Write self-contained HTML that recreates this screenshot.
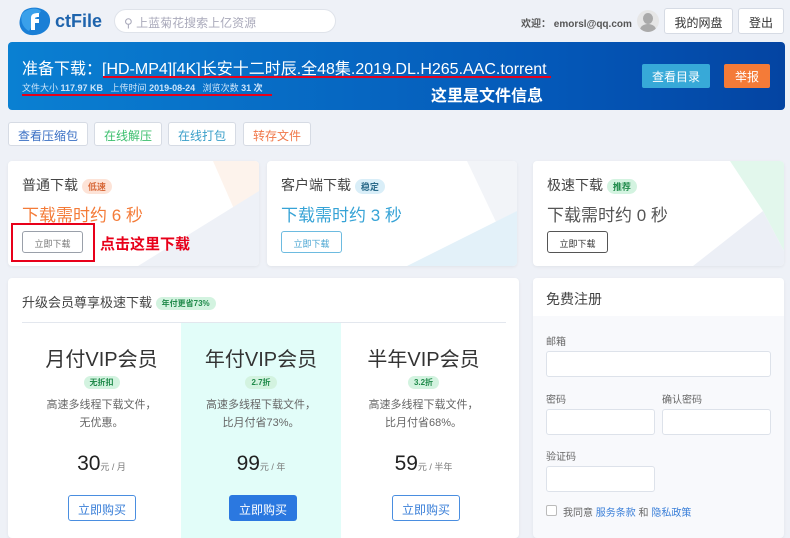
<!DOCTYPE html>
<html><head><meta charset="utf-8"><style>
*{box-sizing:border-box;margin:0;padding:0}
body{width:790px;height:528px;overflow:hidden;background:#eef1f7;font-family:"Liberation Sans","Noto Sans CJK SC",sans-serif;position:relative;color:#333}
.a{position:absolute}
.btn{position:absolute;background:#fff;border:1px solid #d6dbe4;border-radius:3px;font-size:12px;text-align:center}
.card{position:absolute;background:#fff;border-radius:4px;box-shadow:0 1px 3px rgba(0,0,0,.06);overflow:hidden}
.tag{display:inline-block;font-size:9px;padding:1px 6px;border-radius:8px;vertical-align:middle;font-weight:bold}
.inp{position:absolute;background:#fff;border:1px solid #dde2ea;border-radius:3px;height:26px}
.lbl{position:absolute;font-size:10px;color:#666}
</style></head><body>
<svg class="a" style="left:19px;top:6px" width="32" height="30" viewBox="0 0 32 30"><path d="M6 4 C14 -1 30 2 31 13 C32 24 22 30 12 29 C3 28 -1 20 1 13 C2 9 3 6 6 4Z" fill="#1a7fd6"/><path d="M3 8 C8 2 18 1 22 5 L10 25 C4 22 1 15 3 8Z" fill="#3aa0ea"/><path d="M12 24 L12 12 C12 8 15 7 20 7 L20 11 C17 11 16 11 16 13 L20 13 L20 17 L16 17 L16 24Z" fill="#fff"/></svg>
<div class="a" style="left:55px;top:11px;font-size:18px;font-weight:bold;color:#1e64ad">ctFile</div>
<div class="a" style="left:114px;top:9px;width:222px;height:24px;background:#fff;border:1px solid #dfe3ea;border-radius:12px;font-size:12px;color:#aab;padding:4px 0 0 9px">⚲ 上蓝菊花搜索上亿资源</div>
<div class="a" style="left:521px;top:15px;font-size:10px;color:#555;font-weight:bold">欢迎： emorsl@qq.com</div>
<div class="a" style="left:637px;top:10px;width:22px;height:22px;border-radius:50%;background:#e6e6e6;overflow:hidden"><div class="a" style="left:6px;top:3px;width:10px;height:11px;border-radius:50%;background:#aaa"></div><div class="a" style="left:3px;top:14px;width:16px;height:12px;border-radius:50%;background:#aaa"></div></div>
<div class="btn" style="left:664px;top:8px;width:69px;height:26px;padding-top:5px">我的网盘</div>
<div class="btn" style="left:738px;top:8px;width:46px;height:26px;padding-top:5px">登出</div>
<div class="a" style="left:8px;top:42px;width:777px;height:68px;border-radius:4px;background:linear-gradient(90deg,#0a80d2,#0458b8 70%,#0444a2)"></div>
<div class="a" style="left:22px;top:55px;font-size:16px;color:#fff;white-space:nowrap">准备下载：[HD-MP4][4K]长安十二时辰.全48集.2019.DL.H265.AAC.torrent</div>
<div class="a" style="left:103px;top:76px;width:448px;height:2px;background:#e8001a"></div>
<div class="a" style="left:22px;top:81px;font-size:9px;color:#cfe6fa;white-space:nowrap">文件大小 <b>117.97 KB</b> &nbsp; 上传时间 <b>2019-08-24</b> &nbsp; 浏览次数 <b>31 次</b></div>
<div class="a" style="left:22px;top:94px;width:250px;height:2px;background:#e8001a"></div>
<div class="a" style="left:431px;top:82px;font-size:16px;font-weight:bold;color:#fff">这里是文件信息</div>
<div class="a" style="left:642px;top:64px;width:68px;height:24px;background:#37a9d8;border-radius:2px;color:#fff;font-size:12px;text-align:center;padding-top:4px">查看目录</div>
<div class="a" style="left:724px;top:64px;width:46px;height:24px;background:#f47b38;border-radius:2px;color:#fff;font-size:12px;text-align:center;padding-top:4px">举报</div>
<div class="btn" style="left:8px;top:122px;width:80px;height:24px;padding-top:4px;color:#3a6fc4">查看压缩包</div>
<div class="btn" style="left:94px;top:122px;width:68px;height:24px;padding-top:4px;color:#3cbf6e">在线解压</div>
<div class="btn" style="left:168px;top:122px;width:68px;height:24px;padding-top:4px;color:#3a9fc9">在线打包</div>
<div class="btn" style="left:243px;top:122px;width:68px;height:24px;padding-top:4px;color:#f0784a">转存文件</div>

<div class="card" style="left:8px;top:161px;width:251px;height:105px">
<svg class="a" style="left:0;top:0" width="251" height="105"><polygon points="205,0 251,0 251,105" fill="#fdf3ec"/><polygon points="251,30 251,105 130,105" fill="#eef1f7"/></svg>
<div class="a" style="left:14px;top:14px;font-size:14px;color:#444">普通下载 <span class="tag" style="background:#fde3d7;color:#d86a3b">低速</span></div>
<div class="a" style="left:14px;top:40px;font-size:17px;color:#f47b38">下载需时约 6 秒</div>
<div class="a" style="left:14px;top:70px;width:61px;height:22px;border:1px solid #9aa0aa;border-radius:3px;font-size:9px;color:#777;text-align:center;padding-top:5px">立即下载</div>
</div>
<div class="a" style="left:11px;top:223px;width:84px;height:39px;border:2px solid #e8001a"></div>
<div class="a" style="left:100px;top:233px;font-size:15px;font-weight:bold;color:#e8001a">点击这里下载</div>

<div class="card" style="left:267px;top:161px;width:250px;height:105px">
<svg class="a" style="left:0;top:0" width="250" height="105"><polygon points="200,0 250,0 250,105" fill="#f2f4f8"/><polygon points="250,50 250,105 140,105" fill="#e3f1f9"/></svg>
<div class="a" style="left:14px;top:14px;font-size:14px;color:#444">客户端下载 <span class="tag" style="background:#d9eef8;color:#2c6b8a">稳定</span></div>
<div class="a" style="left:14px;top:40px;font-size:17px;color:#36a3d6">下载需时约 3 秒</div>
<div class="a" style="left:14px;top:70px;width:61px;height:22px;border:1px solid #6dbbe0;border-radius:3px;font-size:9px;color:#4aa5d2;text-align:center;padding-top:5px">立即下载</div>
</div>

<div class="card" style="left:533px;top:161px;width:251px;height:105px">
<svg class="a" style="left:0;top:0" width="251" height="105"><polygon points="197,0 251,0 251,90 230,50" fill="#e2f7ec"/><polygon points="230,50 251,90 251,105 160,105" fill="#eceff6"/></svg>
<div class="a" style="left:14px;top:14px;font-size:14px;color:#444">极速下载 <span class="tag" style="background:#d3f3e0;color:#1f8a4a">推荐</span></div>
<div class="a" style="left:14px;top:40px;font-size:17px;color:#555">下载需时约 0 秒</div>
<div class="a" style="left:14px;top:70px;width:61px;height:22px;border:1px solid #555;border-radius:3px;font-size:9px;color:#333;text-align:center;padding-top:5px">立即下载</div>
</div>

<div class="card" style="left:8px;top:278px;width:511px;height:260px">
<div class="a" style="left:14px;top:14px;font-size:13px;color:#444">升级会员尊享极速下载 <span class="tag" style="background:#d3f3e0;color:#1f8a4a;font-size:8px">年付更省73%</span></div>
<div class="a" style="left:14px;top:44px;width:484px;height:1px;background:#e3e7ee"></div>
<div class="a" style="left:173px;top:45px;width:160px;height:215px;background:#e2fdf9"></div>
<div class="a" style="left:14px;top:45px;width:484px;text-align:center;display:flex">
<div style="width:159px"><div style="font-size:20px;color:#333;margin-top:20px">月付VIP会员</div><span class="tag" style="background:#d3f3e0;color:#1f8a4a;font-size:8px;margin-top:3px">无折扣</span><div style="font-size:11px;color:#666;line-height:18px;margin-top:6px">高速多线程下载文件，<br>无优惠。</div><div style="margin-top:20px;font-size:21px;color:#222">30<span style="font-size:9px;color:#777">元 / 月</span></div></div>
<div style="width:160px"><div style="font-size:20px;color:#333;margin-top:20px">年付VIP会员</div><span class="tag" style="background:#d3f3e0;color:#1f8a4a;font-size:8px;margin-top:3px">2.7折</span><div style="font-size:11px;color:#666;line-height:18px;margin-top:6px">高速多线程下载文件，<br>比月付省73%。</div><div style="margin-top:20px;font-size:21px;color:#222">99<span style="font-size:9px;color:#777">元 / 年</span></div></div>
<div style="width:165px"><div style="font-size:20px;color:#333;margin-top:20px">半年VIP会员</div><span class="tag" style="background:#d3f3e0;color:#1f8a4a;font-size:8px;margin-top:3px">3.2折</span><div style="font-size:11px;color:#666;line-height:18px;margin-top:6px">高速多线程下载文件，<br>比月付省68%。</div><div style="margin-top:20px;font-size:21px;color:#222">59<span style="font-size:9px;color:#777">元 / 半年</span></div></div>
</div>
<div class="a" style="left:60px;top:217px;width:68px;height:26px;border:1px solid #4a8ee0;border-radius:3px;color:#3a7fd8;font-size:12px;text-align:center;padding-top:5px">立即购买</div>
<div class="a" style="left:221px;top:217px;width:68px;height:26px;background:#2b78e0;border-radius:3px;color:#fff;font-size:12px;text-align:center;padding-top:6px">立即购买</div>
<div class="a" style="left:384px;top:217px;width:68px;height:26px;border:1px solid #4a8ee0;border-radius:3px;color:#3a7fd8;font-size:12px;text-align:center;padding-top:5px">立即购买</div>
</div>

<div class="card" style="left:533px;top:278px;width:251px;height:260px;background:#f8f9fc">
<div class="a" style="left:0;top:0;width:251px;height:38px;background:#fff"></div>
<div class="a" style="left:13px;top:11px;font-size:14px;color:#444">免费注册</div>
<div class="lbl" style="left:13px;top:55px">邮箱</div>
<div class="inp" style="left:13px;top:73px;width:225px"></div>
<div class="lbl" style="left:13px;top:113px">密码</div>
<div class="lbl" style="left:129px;top:113px">确认密码</div>
<div class="inp" style="left:13px;top:131px;width:109px"></div>
<div class="inp" style="left:129px;top:131px;width:109px"></div>
<div class="lbl" style="left:13px;top:170px">验证码</div>
<div class="inp" style="left:13px;top:188px;width:109px"></div>
<div class="a" style="left:13px;top:227px;width:11px;height:11px;border:1px solid #bbb;border-radius:2px;background:#fff"></div>
<div class="lbl" style="left:30px;top:226px">我同意 <span style="color:#3a7fd8">服务条款</span> 和 <span style="color:#3a7fd8">隐私政策</span></div>
</div>
</body></html>
